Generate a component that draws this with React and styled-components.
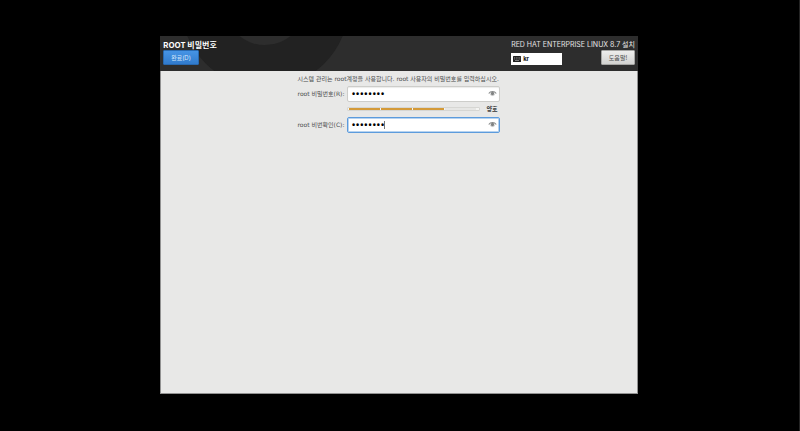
import React, { useState } from 'react';
import styled, { createGlobalStyle } from 'styled-components';

const GlobalStyle = createGlobalStyle`
  * {
    box-sizing: border-box;
  }

  body {
    margin: 0;
    background-color: #000;
    color: #4b4d4d;
    font-family: Inter, 'Noto Sans CJK KR', sans-serif;
    font-size: 6px;
    line-height: 10px;
  }

  button,
  input {
    font-family: inherit;
  }
`;

const Screen = styled.div`
  display: flex;
  min-height: 100vh;
  padding: 36px 161px 37px 160px;
  border-right: 1px solid #242424;
`;

const Window = styled.div`
  flex: 1;
  display: flex;
  flex-direction: column;
  background-color: #e8e8e7;
  border: 1px solid #929292;
  border-top: none;
`;

const Header = styled.header`
  position: relative;
  display: flex;
  justify-content: space-between;
  height: 35px;
  margin: 0 -1px;
  padding: 3px;
  background-color: #2d2d2d;
  overflow: hidden;
`;

const Rings = styled.svg`
  position: absolute;
  top: 0;
  left: 0;
  width: 200px;
  height: 35px;
`;

const HeaderSide = styled.div`
  position: relative;
  display: flex;
  flex-direction: column;
  align-items: flex-start;
`;

const Title = styled.h1`
  margin: 0;
  color: #fff;
  font-family: 'Noto Sans CJK KR', sans-serif;
  font-size: 8px;
  font-weight: 700;
  line-height: 11px;
`;

const Product = styled.div`
  color: #e4e4e4;
  font-size: 7px;
  line-height: 11px;
`;

const Tools = styled.div`
  display: flex;
  justify-content: space-between;
  align-items: flex-end;
  width: 100%;
`;

const Button = styled.button`
  width: ${(props) => (props.$primary ? '36px' : '34px')};
  height: 15px;
  padding: 0;
  border: 1px solid ${(props) => (props.$primary ? '#2869b0' : '#a5a5a3')};
  border-radius: 1px;
  background: ${(props) =>
    props.$primary
      ? 'linear-gradient(#4694e5, #317bcd)'
      : 'linear-gradient(#ededec, #d2d2d0)'};
  color: ${(props) => (props.$primary ? '#d5e7fb' : '#4b4d4d')};
  font-size: 6px;
  line-height: 10px;
`;

const Keyboard = styled.button`
  display: flex;
  align-items: center;
  gap: 2px;
  width: 51px;
  height: 12px;
  padding: 0 2px;
  border: none;
  background-color: #fff;
  color: #111;
  font-size: 6px;
  font-weight: 700;
  line-height: 10px;
`;

const Form = styled.form`
  display: grid;
  grid-template-columns: auto 153px;
  column-gap: 3px;
  align-items: center;
  align-self: center;
  padding-top: 3px;
  font-family: 'DejaVu Sans', 'Noto Sans CJK KR', sans-serif;
`;

const Intro = styled.p`
  grid-column: 1 / -1;
  margin: 0 0 2px;
`;

const Label = styled.label`
  text-align: right;
`;

const Field = styled.div`
  position: relative;
`;

const Input = styled.input`
  display: block;
  width: 100%;
  height: 16px;
  padding: 0 16px 2px 3px;
  border: 1px solid ${(props) => (props.$active ? '#5c9bdc' : '#cdcdca')};
  border-radius: 2px;
  outline: none;
  box-shadow: ${(props) =>
    props.$active ? 'inset 0 0 0 1px #b7d3f0' : 'inset 0 1px 1px #ececea'};
  background-color: #fff;
  color: #000;
  font-family: 'Noto Sans', sans-serif;
  font-size: 11px;
  line-height: 12px;
`;

const Caret = styled.span`
  position: absolute;
  top: 4px;
  left: 37px;
  width: 1px;
  height: 8px;
  background-color: #777;
`;

const Reveal = styled.button`
  position: absolute;
  top: 3px;
  right: 3px;
  width: 9px;
  height: 9px;
  padding: 0;
  border: none;
  background: none;

  svg {
    display: block;
  }
`;

const Strength = styled.div`
  grid-column: 2;
  display: flex;
  justify-content: space-between;
  align-items: center;
  height: 15px;
  padding: 0 3px 2px 0;
  color: #343636;
  font-weight: 700;
`;

const Meter = styled.div`
  display: grid;
  grid-template-columns: repeat(4, 1fr);
  gap: 1px;
  width: 133px;
  height: 4px;
  padding: 0 3px 0 1px;
  border: 1px solid #d6d6d3;
  border-radius: 1px;
  background-color: #f4f4f2;
`;

const Segment = styled.span`
  background-color: ${(props) => (props.$filled ? '#d49a38' : '#e6e6e4')};
`;

function EyeIcon() {
  return (
    <svg width="9" height="9" viewBox="0 0 18 18" aria-hidden="true">
      <path
        d="M1.5 9C5 3.5 13 3.5 16.5 9"
        fill="none"
        stroke="#8a8c8c"
        strokeWidth="2.2"
      />
      <path
        d="M4 10.5C6.5 14 11.5 14 14 10.5"
        fill="none"
        stroke="#b4b6b6"
        strokeWidth="1.4"
      />
      <circle cx="9" cy="9" r="3.4" fill="#808282" />
    </svg>
  );
}

function KeyboardIcon() {
  return (
    <svg width="8" height="6" viewBox="0 0 16 12" aria-hidden="true">
      <rect width="16" height="12" rx="1" fill="#222" />
      <path
        d="M2 3.5h2m1.5 0h2m1.5 0h2m1.5 0h2M2 6h2m1.5 0h2m1.5 0h2m1.5 0h2M4 9h8"
        stroke="#bbb"
        strokeWidth="1.2"
      />
    </svg>
  );
}

function PasswordField({ id, active }) {
  const [value, setValue] = useState('password');
  const [visible, setVisible] = useState(false);

  return (
    <Field>
      <Input
        id={id}
        type={visible ? 'text' : 'password'}
        value={value}
        onChange={(e) => setValue(e.target.value)}
        $active={active}
      />
      {active && <Caret />}
      <Reveal
        type="button"
        aria-label="비밀번호 표시"
        onClick={() => setVisible(!visible)}
      >
        <EyeIcon />
      </Reveal>
    </Field>
  );
}

function App() {
  return (
    <Screen>
      <GlobalStyle />
      <Window>
        <Header>
          <Rings viewBox="0 0 200 35" aria-hidden="true">
            <circle cx="105" cy="-32" r="84" fill="#222" />
            <circle cx="105" cy="-32" r="41" fill="#2d2d2d" />
          </Rings>
          <HeaderSide>
            <Title>ROOT 비밀번호</Title>
            <Button type="button" $primary>
              완료(D)
            </Button>
          </HeaderSide>
          <HeaderSide>
            <Product>RED HAT ENTERPRISE LINUX 8.7 설치</Product>
            <Tools>
              <Keyboard type="button">
                <KeyboardIcon />
                kr
              </Keyboard>
              <Button type="button">도움말!</Button>
            </Tools>
          </HeaderSide>
        </Header>
        <Form>
          <Intro>
            시스템 관리는 root계정을 사용합니다. root 사용자의 비밀번호를
            입력하십시오.
          </Intro>
          <Label htmlFor="password">root 비밀번호(R):</Label>
          <PasswordField id="password" />
          <Strength>
            <Meter role="img" aria-label="양호">
              <Segment $filled />
              <Segment $filled />
              <Segment $filled />
              <Segment />
            </Meter>
            양호
          </Strength>
          <Label htmlFor="confirm">root 비번확인(C):</Label>
          <PasswordField id="confirm" active />
        </Form>
      </Window>
    </Screen>
  );
}

export default App;
